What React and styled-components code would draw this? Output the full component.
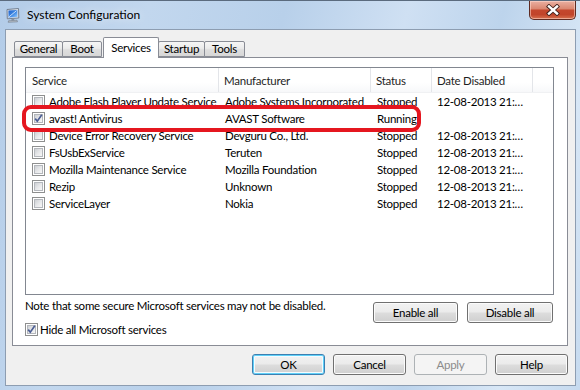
import React from "react";
import styled, { createGlobalStyle } from "styled-components";

const Global = createGlobalStyle`
  html, body { margin: 0; padding: 0; }
  body { font-family: Lato, "Noto Sans", sans-serif; font-size: 11.5px; letter-spacing: -0.25px; color: #000; }
  * { box-sizing: border-box; }
`;

const Frame = styled.div`
  width: 580px;
  height: 390px;
  overflow: hidden;
  display: flex;
  flex-direction: column;
  border-top: 1px solid #5b6b7e;
  background: linear-gradient(105deg, #b3cce8 0%, #c2d7ee 22%, #b8d0ea 42%, #cfe0f3 60%, #bdd4ec 74%, #d8e7f6 88%, #c6daef 100%);
`;

const TitleBar = styled.div`
  height: 28px;
  display: flex;
  align-items: flex-start;
  flex: none;
`;

const TitleIcon = styled.svg`
  margin: 7px 0 0 6px;
  flex: none;
`;

const TitleText = styled.div`
  margin: 6px 0 0 7px;
  line-height: 16px;
  font-size: 12px;
  letter-spacing: 0;
  color: #000;
  text-shadow: 0 0 8px rgba(255,255,255,0.9);
`;

const CloseButton = styled.div`
  margin-left: auto;
  margin-right: 4px;
  width: 47px;
  height: 19px;
  border: 1px solid #5e2b22;
  border-top: none;
  border-radius: 0 0 5px 5px;
  background: linear-gradient(#eab0a2 0%, #db8872 42%, #c4472d 52%, #c1442a 75%, #d7714f 100%);
  box-shadow: inset 0 0 0 1px rgba(255,220,210,0.55);
  display: flex;
  align-items: center;
  justify-content: center;
`;

const Body = styled.div`
  flex: 1;
  margin: 0 4px 4px 5px;
  border: 1px solid #8d9db1;
  background: #f0f0f0;
  padding: 7px 7px 0 6px;
  display: flex;
  flex-direction: column;
`;

const TabStrip = styled.div`
  height: 20px;
  display: flex;
  align-items: flex-end;
  padding-left: 2px;
  flex: none;
`;

const Tab = styled.div`
  position: relative;
  width: ${p => p.$w}px;
  margin-left: ${p => p.$ml || 0}px;
  height: ${p => (p.$active ? 21 : 16)}px;
  margin-bottom: ${p => (p.$active ? -1 : 0)}px;
  z-index: ${p => (p.$active ? 2 : 1)};
  border: 1px solid #898c95;
  border-bottom: ${p => (p.$active ? "none" : "1px solid #898c95")};
  border-radius: 2px 2px 0 0;
  background: ${p => (p.$active ? "#fff" : "linear-gradient(#f6f6f6, #ebebeb 45%, #dedede 55%, #d7d7d7)")};
  display: flex;
  align-items: center;
  justify-content: center;
  line-height: 14px;
  padding-bottom: ${p => (p.$active ? 1 : 0)}px;
`;

const Panel = styled.div`
  position: relative;
  height: 289px;
  border: 1px solid #898c95;
  background: #fff;
  padding: 9px 13px 0 12px;
  display: flex;
  flex-direction: column;
  flex: none;
`;

const ListBox = styled.div`
  width: 529px;
  height: 228px;
  border: 1px solid #828790;
  background: #fff;
  flex: none;
`;

const cols = "193px 152px 61px 101px 1fr";

const HeaderRow = styled.div`
  display: grid;
  grid-template-columns: ${cols};
  height: 25px;
  background: linear-gradient(#ffffff, #ffffff 60%, #f7f8fa);
  border-bottom: 1px solid #f0f1f3;
`;

const HeaderCell = styled.div`
  border-right: ${p => (p.$last ? "none" : "1px solid #e3e5e9")};
  padding-left: ${p => p.$pl}px;
  padding-top: 1px;
  display: flex;
  align-items: center;
  color: #1e1e1e;
  white-space: nowrap;
  overflow: hidden;
`;

const Row = styled.div`
  display: grid;
  grid-template-columns: ${cols};
  height: 17px;
  align-items: center;
`;

const Cell = styled.div`
  padding-left: ${p => p.$pl}px;
  white-space: nowrap;
  overflow: hidden;
  display: flex;
  align-items: center;
  gap: 4px;
  line-height: 17px;
`;

const BoxWrap = styled.span`
  position: relative;
  width: 13px;
  height: 13px;
  flex: none;
  border: 1px solid #8e8f8f;
  background: #fff;
  display: inline-block;
  &::before {
    content: "";
    position: absolute;
    left: 1px; top: 1px; right: 1px; bottom: 1px;
    border: 1px solid #b4b7bc;
    background: linear-gradient(135deg, #cdd0d4 0%, #e6e7e9 50%, #f7f7f7 100%);
  }
  svg { position: absolute; left: 0; top: 0; }
`;

function Checkbox({ checked }) {
  return (
    <BoxWrap>
      {checked && (
        <svg width="11" height="11" viewBox="0 0 11 11">
          <path d="M2.2 5.6 L4.3 8.2 L8.8 1.8" fill="none" stroke="#4b5e94" strokeWidth="1.7" />
        </svg>
      )}
    </BoxWrap>
  );
}

const Highlight = styled.div`
  position: absolute;
  left: 9px;
  top: 47px;
  width: 399px;
  height: 27px;
  border: 4px solid #e5161f;
  border-radius: 9px;
  pointer-events: none;
`;

const Lower = styled.div`
  display: flex;
  justify-content: space-between;
  width: 529px;
`;

const LeftCol = styled.div`
  display: flex;
  flex-direction: column;
`;

const Note = styled.div`
  margin-top: 3px;
  line-height: 15px;
  white-space: nowrap;
`;

const CheckRow = styled.label`
  margin-top: 9px;
  display: flex;
  align-items: center;
  gap: 2px;
  line-height: 15px;
`;

const ButtonGroup = styled.div`
  display: flex;
  gap: 9px;
  margin-top: 7px;
  margin-right: 1px;
`;

const Button = styled.div`
  width: ${p => p.$w}px;
  height: 21px;
  border: 1px solid ${p => (p.$default ? "#3c7fb1" : p.$disabled ? "#adb2b5" : "#707070")};
  border-radius: 3px;
  background: ${p =>
    p.$disabled
      ? "#f4f4f4"
      : "linear-gradient(#f2f2f2 0%, #ebebeb 48%, #dddddd 52%, #cfcfcf 100%)"};
  box-shadow: ${p =>
    p.$default
      ? "inset 0 0 0 1px #5fd0f8, inset 0 0 0 2px #f4fbff"
      : p.$disabled
      ? "none"
      : "inset 0 0 0 1px #fbfbfb"};
  color: ${p => (p.$disabled ? "#8b8b8b" : "#000")};
  display: flex;
  align-items: center;
  justify-content: center;
  line-height: 14px;
`;

const BottomBar = styled.div`
  margin-top: 8px;
  display: flex;
  justify-content: flex-end;
  gap: 8px;
`;

const services = [
  ["Adobe Flash Player Update Service", "Adobe Systems Incorporated", "Stopped", "12-08-2013 21:…", false],
  ["avast! Antivirus", "AVAST Software", "Running", "", true],
  ["Device Error Recovery Service", "Devguru Co., Ltd.", "Stopped", "12-08-2013 21:…", false],
  ["FsUsbExService", "Teruten", "Stopped", "12-08-2013 21:…", false],
  ["Mozilla Maintenance Service", "Mozilla Foundation", "Stopped", "12-08-2013 21:…", false],
  ["Rezip", "Unknown", "Stopped", "12-08-2013 21:…", false],
  ["ServiceLayer", "Nokia", "Stopped", "12-08-2013 21:…", false],
];

const tabs = [
  { label: "General", w: 49, ml: 0 },
  { label: "Boot", w: 40, ml: -1 },
  { label: "Services", w: 56, ml: 1, active: true },
  { label: "Startup", w: 47, ml: -1 },
  { label: "Tools", w: 41, ml: -1 },
];

export default function App() {
  return (
    <>
      <Global />
      <Frame>
        <TitleBar>
          <TitleIcon width="14" height="15" viewBox="0 0 14 15">
            <defs>
              <linearGradient id="scr" x1="0" y1="0" x2="1" y2="1">
                <stop offset="0" stopColor="#1f5fc8" />
                <stop offset="0.55" stopColor="#3f8ae6" />
                <stop offset="1" stopColor="#9fd0ff" />
              </linearGradient>
            </defs>
            <path d="M1 1.5 L12.5 0.5 L12.8 10 L1.3 10.8 Z" fill="#dfe4ea" stroke="#6b7687" strokeWidth="0.9" />
            <path d="M2.4 2.6 L11.3 1.9 L11.5 8.9 L2.6 9.5 Z" fill="url(#scr)" />
            <path d="M3 8.8 L10.6 2.6" stroke="#e8f3ff" strokeWidth="0.8" />
            <path d="M5.5 10.8 L8 10.6 L8.4 12.4 L5.3 12.6 Z" fill="#8a939e" />
            <path d="M2.5 12.8 L11 12.2 L11.5 13.8 L2.2 14.3 Z" fill="#b8c0c9" stroke="#707b88" strokeWidth="0.6" />
          </TitleIcon>
          <TitleText>System Configuration</TitleText>
          <CloseButton>
            <svg width="14" height="12" viewBox="0 0 14 12">
              <path d="M3 2.5 L11 9.5 M11 2.5 L3 9.5" stroke="#3d1f1a" strokeWidth="4.2" strokeLinecap="square" />
              <path d="M3 2.5 L11 9.5 M11 2.5 L3 9.5" stroke="#ffffff" strokeWidth="2.4" strokeLinecap="square" />
            </svg>
          </CloseButton>
        </TitleBar>
        <Body>
          <TabStrip>
            {tabs.map(t => (
              <Tab key={t.label} $w={t.w} $ml={t.ml} $active={t.active}>
                {t.label}
              </Tab>
            ))}
          </TabStrip>
          <Panel>
            <ListBox>
              <HeaderRow>
                <HeaderCell $pl={6}>Service</HeaderCell>
                <HeaderCell $pl={5}>Manufacturer</HeaderCell>
                <HeaderCell $pl={5}>Status</HeaderCell>
                <HeaderCell $pl={5}>Date Disabled</HeaderCell>
                <HeaderCell $pl={0} $last />
              </HeaderRow>
              {services.map(([name, maker, status, date, checked]) => (
                <Row key={name}>
                  <Cell $pl={6}>
                    <Checkbox checked={checked} />
                    <span>{name}</span>
                  </Cell>
                  <Cell $pl={6}>{maker}</Cell>
                  <Cell $pl={6}>{status}</Cell>
                  <Cell $pl={5}>{date}</Cell>
                  <Cell $pl={0} />
                </Row>
              ))}
            </ListBox>
            <Lower>
              <LeftCol>
                <Note>Note that some secure Microsoft services may not be disabled.</Note>
                <CheckRow>
                  <Checkbox checked />
                  <span>Hide all Microsoft services</span>
                </CheckRow>
              </LeftCol>
              <ButtonGroup>
                <Button $w={85}>Enable all</Button>
                <Button $w={86}>Disable all</Button>
              </ButtonGroup>
            </Lower>
            <Highlight />
          </Panel>
          <BottomBar>
            <Button $w={73} $default>OK</Button>
            <Button $w={73}>Cancel</Button>
            <Button $w={73} $disabled>Apply</Button>
            <Button $w={73}>Help</Button>
          </BottomBar>
        </Body>
      </Frame>
    </>
  );
}
